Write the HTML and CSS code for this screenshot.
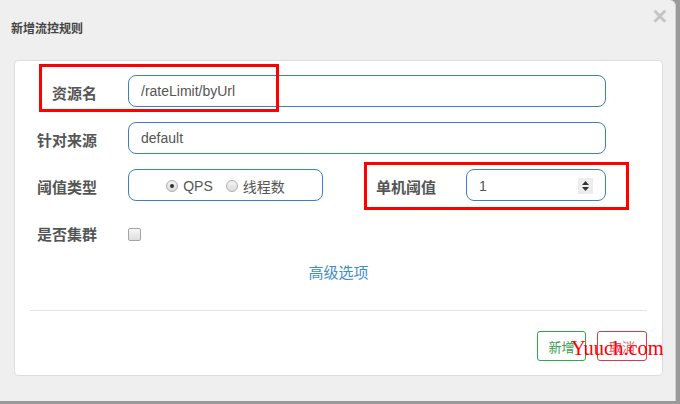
FILE: index.html
```html
<!DOCTYPE html>
<html lang="zh-CN">
<head>
<meta charset="utf-8">
<title>新增流控规则</title>
<link rel="stylesheet" href="styles.css">
</head>
<body>
<div class="dialog">
  <div class="header">
    <h4 class="title">新增流控规则</h4>
    <span class="close">×</span>
  </div>
  <div class="panel">
    <div class="row">
      <label class="label">资源名</label>
      <div class="input grow">/rateLimit/byUrl</div>
    </div>
    <div class="row">
      <label class="label">针对来源</label>
      <div class="input grow">default</div>
    </div>
    <div class="row">
      <label class="label">阈值类型</label>
      <div class="input radios">
        <span class="radio checked"></span><span class="rtext">QPS</span>
        <span class="radio"></span><span class="rtext">线程数</span>
      </div>
      <label class="label label2">单机阈值</label>
      <div class="input number">
        <span>1</span>
        <span class="spinner">
          <svg width="15" height="16" viewBox="0 0 15 16"><path d="M4 7 L7.5 3 L11 7 Z M4 9 L7.5 13 L11 9 Z" fill="#333"/></svg>
        </span>
      </div>
    </div>
    <div class="row row-check">
      <label class="label">是否集群</label>
      <span class="checkbox"></span>
    </div>
    <div class="advanced"><a class="link">高级选项</a></div>
    <div class="divider"></div>
    <div class="footer">
      <button class="btn btn-add">新增</button>
      <button class="btn btn-cancel">取消</button>
    </div>
  </div>
  <div class="mark mark1"></div>
  <div class="mark mark2"></div>
  <div class="watermark">Yuuch.com</div>
</div>
</body>
</html>
```
FILE: styles.css
```css
* { box-sizing: border-box; }
html, body { margin: 0; padding: 0; }
body {
  width: 680px;
  height: 404px;
  background: #9a9a9a;
  overflow: hidden;
  font-family: "Noto Sans CJK SC", "Liberation Sans", sans-serif;
}
.dialog {
  position: relative;
  width: 676px;
  height: 401px;
  background: #efefef;
  border-top-right-radius: 6px;
  border-right: 1px solid #d0d0d0;
}
.header {
  height: 60px;
  display: flex;
  justify-content: space-between;
  align-items: flex-start;
  padding: 0 8px 0 11px;
}
.title {
  margin: 19px 0 0;
  font-size: 12px;
  line-height: 18px;
  font-weight: bold;
  color: #444;
}
.close {
  margin-top: 3px;
  font-family: "Liberation Sans", sans-serif;
  font-size: 25px;
  line-height: 26px;
  font-weight: bold;
  color: #c4c4c4;
}
.panel {
  margin: 0 12px 0 14px;
  height: 316px;
  background: #fff;
  border: 1px solid #dcdcdc;
  border-radius: 4px;
  padding: 14px 0 0 0;
}
.row {
  display: flex;
  align-items: center;
  height: 32px;
  margin-bottom: 15px;
}
.label {
  width: 82px;
  text-align: right;
  font-size: 15px;
  font-weight: bold;
  color: #555;
  line-height: 20px;
  padding-top: 3px;
  margin-right: 31px;
  flex: none;
}
.label2 {
  width: 113px;
  margin-right: 30px;
}
.input {
  height: 32px;
  border: 1px solid #3f7fbf;
  border-radius: 8px;
  padding: 0 12px;
  display: flex;
  align-items: center;
  font-family: "Liberation Sans", sans-serif;
  font-size: 14px;
  color: #555;
}
.grow {
  flex: none;
  width: 478px;
}
.radios {
  width: 195px;
  justify-content: center;
  padding-top: 2px;
}
.radio {
  width: 12px;
  height: 12px;
  border-radius: 50%;
  border: 1px solid #acacac;
  background: linear-gradient(#f4f4f4, #dcdcdc);
  position: relative;
  margin-right: 5px;
  flex: none;
}
.radio.checked::after {
  content: "";
  position: absolute;
  left: 3px;
  top: 3px;
  width: 4px;
  height: 4px;
  border-radius: 50%;
  background: #333;
}
.rtext {
  margin-right: 13px;
}
.rtext:last-child {
  margin-right: 0;
  font-family: "Noto Sans CJK SC", sans-serif;
  font-size: 14px;
}
.number {
  width: 140px;
  justify-content: space-between;
  padding-top: 1px;
}
.spinner {
  width: 15px;
  height: 16px;
  background: #ececec;
  display: flex;
}
.row-check {
  height: 32px;
}
.checkbox {
  width: 13px;
  height: 13px;
  border: 1px solid #a4a4a4;
  border-radius: 2px;
  background: linear-gradient(#f6f6f6, #dedede);
  margin-top: 5px;
}
.advanced {
  margin-top: -4px;
  text-align: center;
  height: 51px;
}
.link {
  font-size: 15px;
  line-height: 20px;
  color: #3d8bd1;
}
.divider {
  height: 1px;
  background: #e3e3e3;
  margin: 0 15px;
}
.footer {
  display: flex;
  justify-content: flex-end;
  gap: 11px;
  padding: 20px 15px 0 0;
}
.btn {
  height: 30px;
  width: 50px;
  background: #fff;
  border-radius: 3px;
  font-family: "Noto Sans CJK SC", sans-serif;
  font-size: 13px;
  padding: 0;
}
.btn-add {
  width: 49px;
  border: 1px solid #2fa84a;
  color: #3a9d4c;
}
.btn-cancel {
  border: 1px solid #e03848;
  color: #e0606a;
}
.mark {
  position: absolute;
  border: 3px solid #ff0000;
}
.mark1 { left: 39px; top: 64px; width: 240px; height: 48px; }
.mark2 { left: 364px; top: 162px; width: 265px; height: 48px; }
.watermark {
  position: absolute;
  left: 571px;
  top: 338px;
  font-family: "Liberation Serif", serif;
  font-size: 20.5px;
  line-height: 20px;
  color: #f00;
}
```
